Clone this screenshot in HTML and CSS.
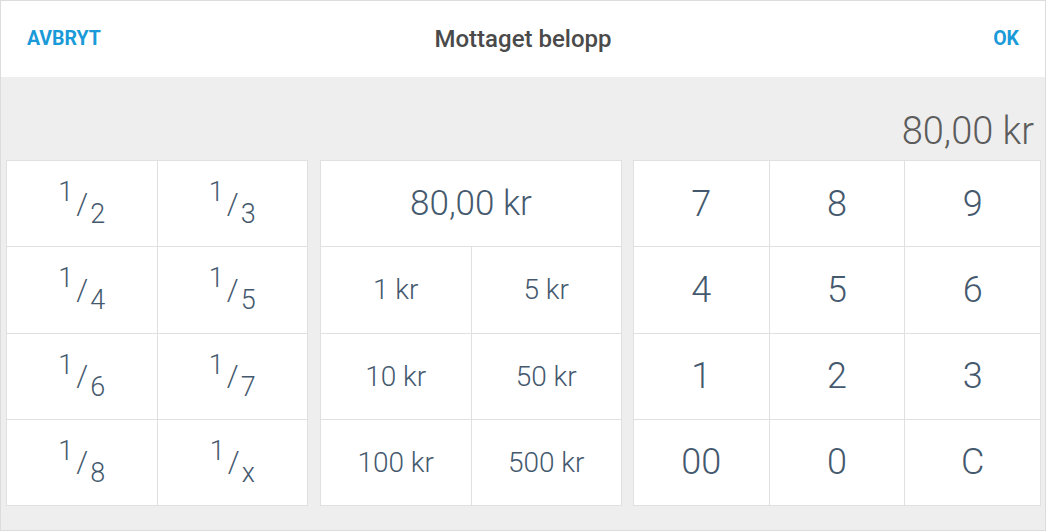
FILE: index.html
```html
<!DOCTYPE html>
<html lang="sv">
<head>
<meta charset="utf-8">
<title>Mottaget belopp</title>
<link rel="stylesheet" href="styles.css">
</head>
<body>
<div class="app">
  <header class="header">
    <button class="hbtn">AVBRYT</button>
    <h1 class="title">Mottaget belopp</h1>
    <button class="hbtn">OK</button>
  </header>
  <main class="body">
    <div class="amount">80,00 kr</div>
    <div class="panels">
      <section class="panel panel-frac">
        <div class="cell"><span class="frac"><span class="num">1</span><span class="sl">/</span><span class="den">2</span></span></div>
        <div class="cell"><span class="frac"><span class="num">1</span><span class="sl">/</span><span class="den">3</span></span></div>
        <div class="cell"><span class="frac"><span class="num">1</span><span class="sl">/</span><span class="den">4</span></span></div>
        <div class="cell"><span class="frac"><span class="num">1</span><span class="sl">/</span><span class="den">5</span></span></div>
        <div class="cell"><span class="frac"><span class="num">1</span><span class="sl">/</span><span class="den">6</span></span></div>
        <div class="cell"><span class="frac"><span class="num">1</span><span class="sl">/</span><span class="den">7</span></span></div>
        <div class="cell"><span class="frac"><span class="num">1</span><span class="sl">/</span><span class="den">8</span></span></div>
        <div class="cell"><span class="frac"><span class="num">1</span><span class="sl">/</span><span class="den">x</span></span></div>
      </section>
      <section class="panel panel-cash">
        <div class="cell cell-wide">80,00 kr</div>
        <div class="cell">1 kr</div>
        <div class="cell">5 kr</div>
        <div class="cell">10 kr</div>
        <div class="cell">50 kr</div>
        <div class="cell">100 kr</div>
        <div class="cell">500 kr</div>
      </section>
      <section class="panel panel-num">
        <div class="cell">7</div>
        <div class="cell">8</div>
        <div class="cell">9</div>
        <div class="cell">4</div>
        <div class="cell">5</div>
        <div class="cell">6</div>
        <div class="cell">1</div>
        <div class="cell">2</div>
        <div class="cell">3</div>
        <div class="cell">00</div>
        <div class="cell">0</div>
        <div class="cell">C</div>
      </section>
    </div>
  </main>
</div>
</body>
</html>
```
FILE: styles.css
```css
* { box-sizing: border-box; }
html, body { margin: 0; padding: 0; }
body {
  font-family: Roboto, "Liberation Sans", sans-serif;
  background: #ffffff;
}
.app {
  width: 1046px;
  height: 531px;
  border: 1px solid #dcdcdc;
  display: flex;
  flex-direction: column;
  background: #eeeeee;
}
.header {
  height: 76px;
  flex: none;
  background: #ffffff;
  display: flex;
  align-items: center;
  justify-content: space-between;
  padding: 0 26px 0 26px;
  position: relative;
}
.hbtn {
  border: 0;
  background: none;
  padding: 0;
  font-family: Roboto, "Liberation Sans", sans-serif;
  font-weight: 700;
  font-size: 19.5px;
  color: #1a9ad8;
  line-height: 24px;
}
.title {
  margin: 0;
  font-size: 24px;
  font-weight: 500;
  color: #4a4a4a;
  position: absolute;
  left: 0;
  right: 0;
  text-align: center;
  pointer-events: none;
}
.body {
  flex: 1;
  display: flex;
  flex-direction: column;
  padding: 0 5px;
}
.amount {
  height: 83px;
  display: flex;
  align-items: flex-end;
  justify-content: flex-end;
  padding: 0 6px 10px 0;
  font-size: 38px;
  font-weight: 300;
  color: #5c5c5c;
  line-height: 38px;
}
.panels {
  display: grid;
  grid-template-columns: 302px 302px 407px;
  column-gap: 12px;
  height: 346px;
}
.panels .panel-num { margin-left: -1px; }
.panel {
  display: grid;
  grid-template-rows: repeat(4, 1fr);
  gap: 1px;
  padding: 1px;
  background: #e0e0e0;
}
.panel-frac, .panel-cash { grid-template-columns: 1fr 1fr; }
.panel-num { grid-template-columns: 1fr 1fr 1fr; }
.cell {
  background: #ffffff;
  display: flex;
  align-items: center;
  justify-content: center;
  color: #45596e;
  font-weight: 300;
  font-size: 36px;
}
.panel-cash .cell { font-size: 28px; }
.panel-cash .cell-wide { grid-column: span 2; font-size: 35px; }
.frac {
  display: flex;
  height: 49px;
  font-size: 27px;
  line-height: 27px;
}
.num { align-self: flex-start; }
.den { align-self: flex-end; }
.sl {
  align-self: center;
  font-size: 30px;
  line-height: 30px;
  margin: 0 2px 0 3px;
}
```
